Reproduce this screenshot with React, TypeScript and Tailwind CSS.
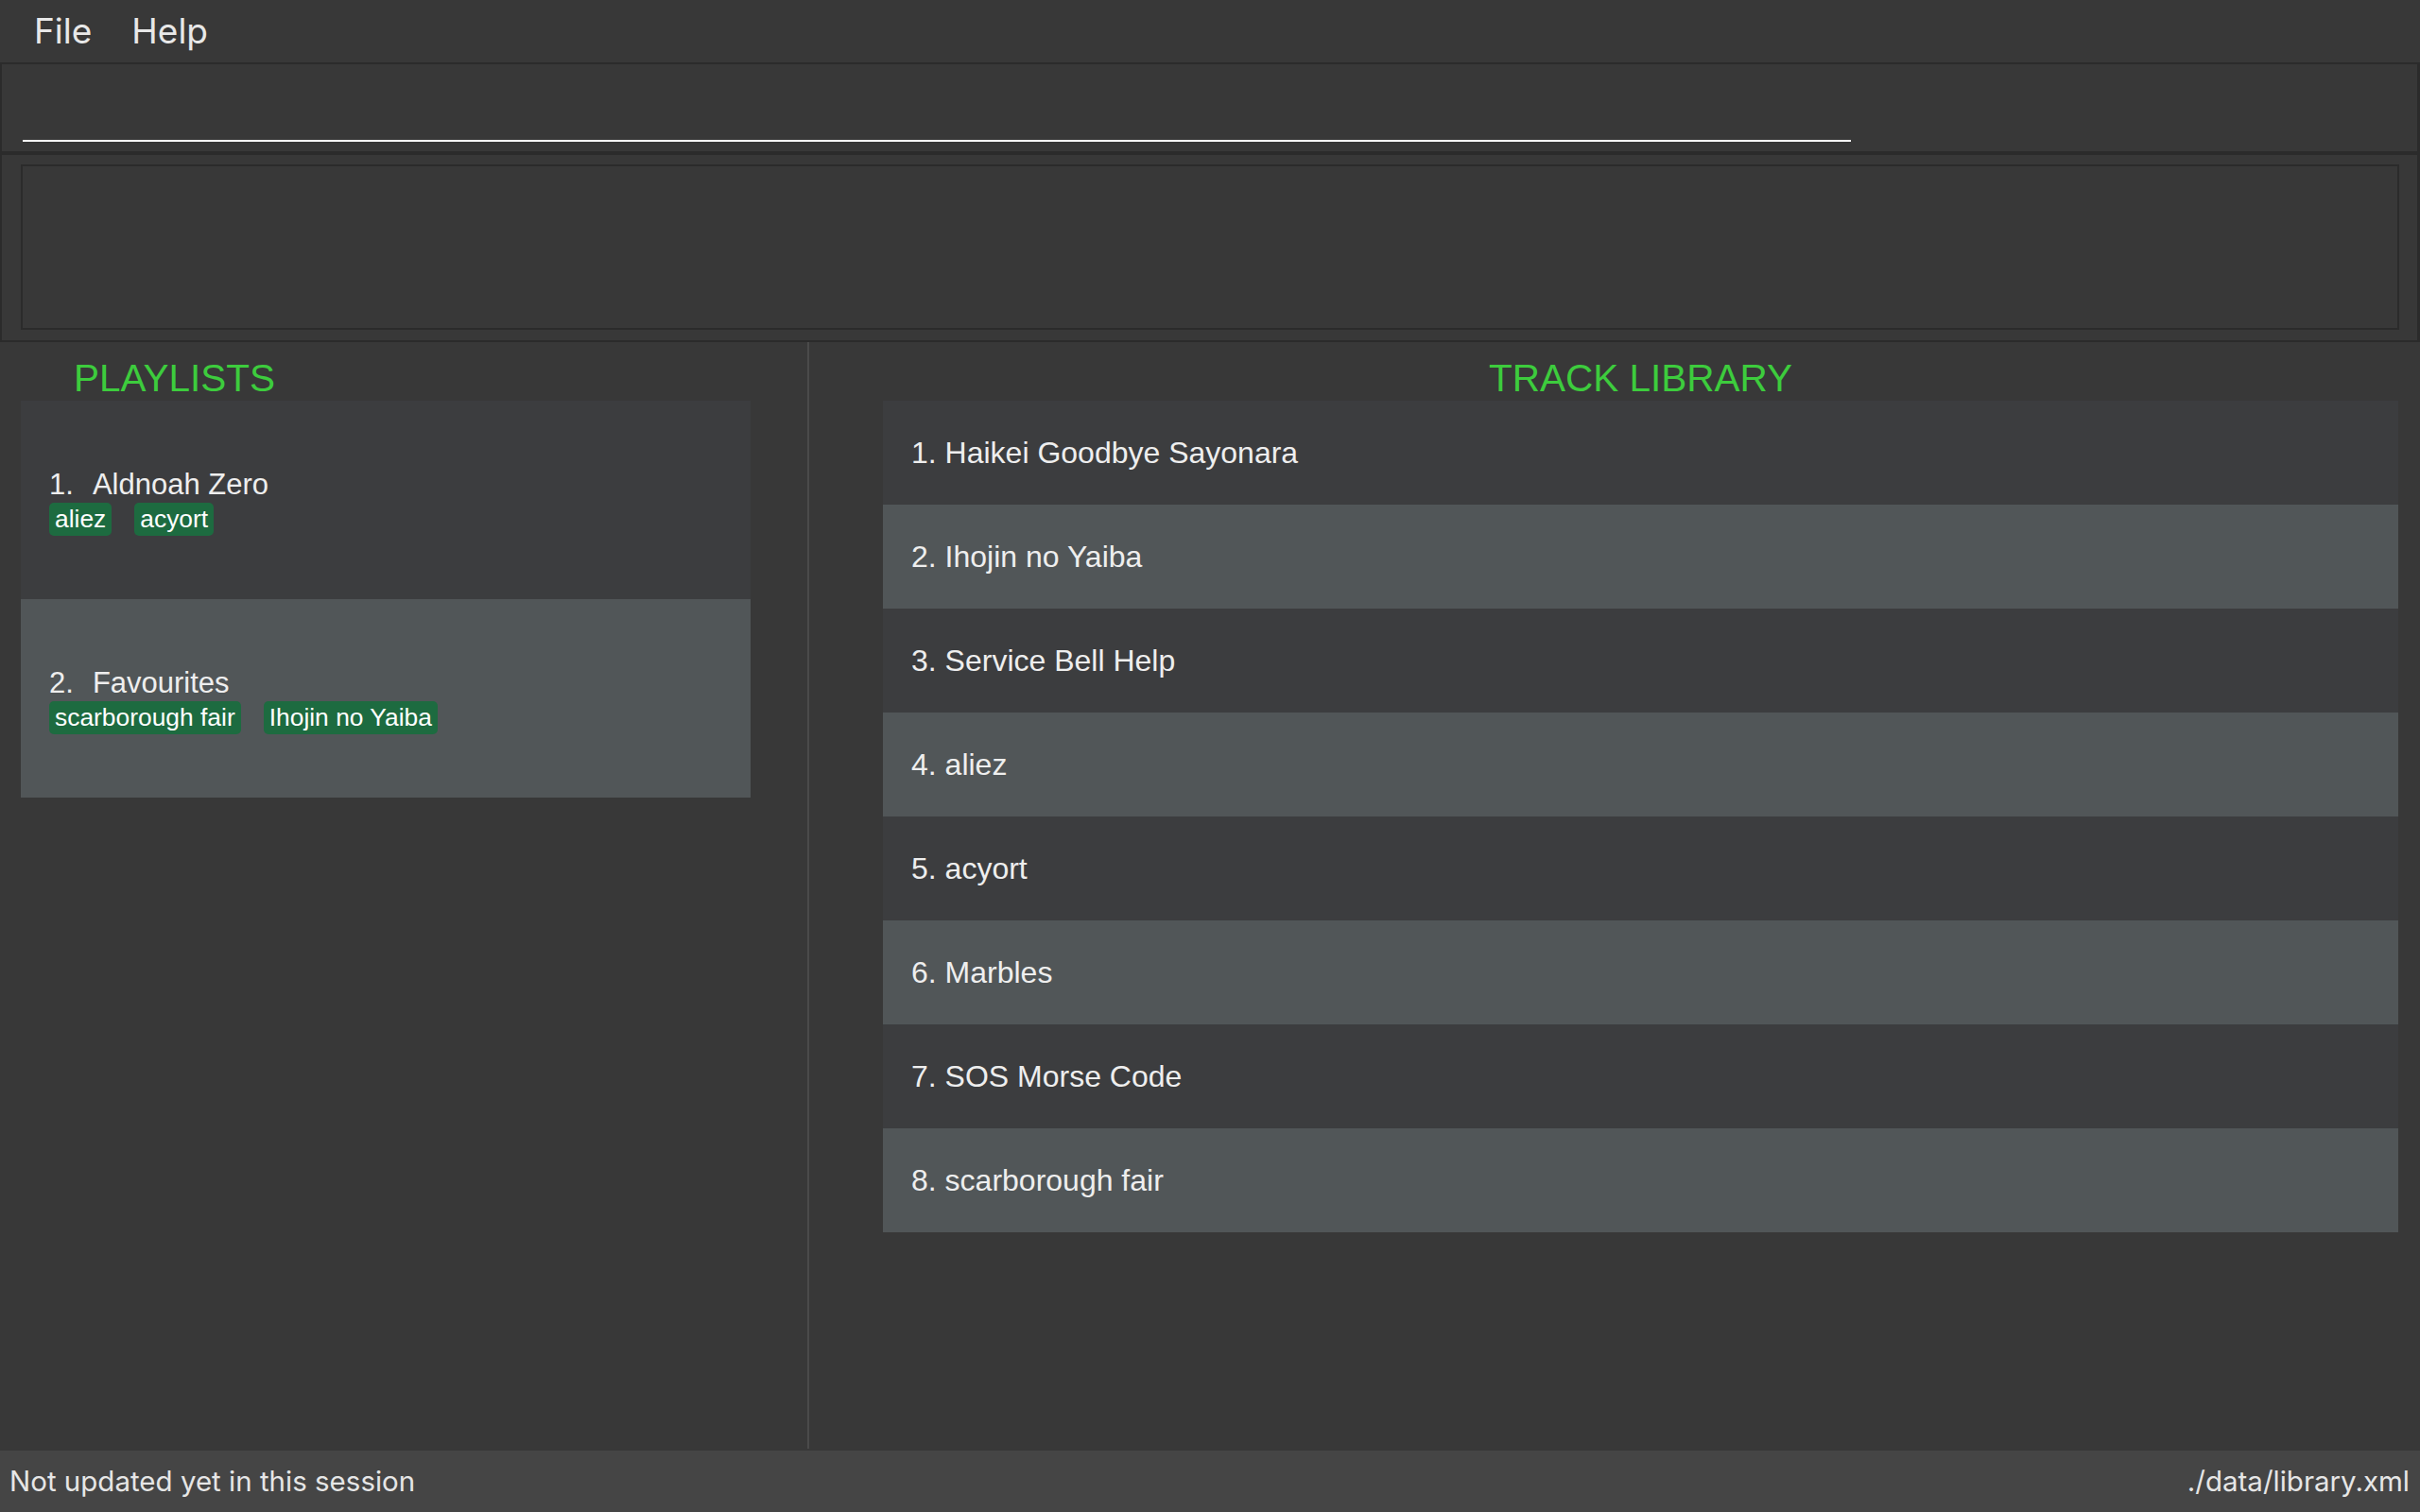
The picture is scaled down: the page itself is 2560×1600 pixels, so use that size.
import React from 'react';

const playlists = [
  { id: 1, name: 'Aldnoah Zero', tracks: ['aliez', 'acyort'] },
  { id: 2, name: 'Favourites', tracks: ['scarborough fair', 'Ihojin no Yaiba'] },
];

const tracks = [
  'Haikei Goodbye Sayonara',
  'Ihojin no Yaiba',
  'Service Bell Help',
  'aliez',
  'acyort',
  'Marbles',
  'SOS Morse Code',
  'scarborough fair',
];

const sans = "font-['Liberation_Sans',Arial,sans-serif]";
const ui = "font-['Inter','Noto_Sans',sans-serif]";

function PlaylistCard({ id, name, tracks, index }: { id: number; name: string; tracks: string[]; index: number }) {
  return (
    <div className={`h-[210px] flex flex-col justify-center pl-[30px] pt-[4px] ${index % 2 === 0 ? 'bg-[#3c3d3f]' : 'bg-[#515658]'}`}>
      <div className="flex text-[31px] leading-[36px] text-[#eeeeee]">
        <span>{id}.</span>
        <span className="ml-[20px]">{name}</span>
      </div>
      <div className="flex gap-[24px] mt-[1px]">
        {tracks.map((t) => (
          <span key={t} className="h-[35px] px-[6px] flex items-center rounded-[5px] bg-[#1d6b40] text-[26.4px] text-white">
            {t}
          </span>
        ))}
      </div>
    </div>
  );
}

export default function App() {
  return (
    <div className={`w-[2560px] h-[1600px] bg-[#383838] flex flex-col overflow-hidden ${sans}`}>
      {/* menu bar */}
      <div className={`h-[66px] flex items-center pl-[36px] gap-[42px] text-[37px] text-[#e8e8e8] ${ui}`}>
        <span>File</span>
        <span>Help</span>
      </div>
      <div className="h-[2px] bg-[#2b2b2b]" />

      {/* command box */}
      <div className="h-[92px] border-l-2 border-r-[3px] border-[#2b2b2b] pl-[22px]">
        <div className="mt-[80px] w-[1934px] h-[2px] bg-white" />
      </div>
      <div className="h-[4px] bg-[#2b2b2b]" />

      {/* result display */}
      <div className="h-[198px] border-l-2 border-r-[3px] border-b-2 border-[#2b2b2b] pl-[20px] pr-[19px] pt-[10px] pb-[11px]">
        <div className="h-full border-2 border-[#2b2b2b]" />
      </div>

      {/* main */}
      <div className="flex-1 flex min-h-0">
        <div className="w-[854px] pt-[18px] px-[22px] flex flex-col">
          <div className="h-[40px] leading-none text-[40.5px] text-[#3dcc3d] pl-[56px] mb-[4px]">PLAYLISTS</div>
          <div className="w-[772px] flex flex-col">
            {playlists.map((p, i) => (
              <PlaylistCard key={p.id} {...p} index={i} />
            ))}
          </div>
        </div>
        <div className="w-[2px] bg-[#4a4a4a]" />
        <div className="flex-1 pt-[18px] pl-[78px] pr-[23px] flex flex-col">
          <div className="h-[40px] leading-none text-[40.5px] text-[#3dcc3d] text-center mb-[4px]">TRACK LIBRARY</div>
          <div className="flex flex-col">
            {tracks.map((t, i) => (
              <div
                key={t}
                className={`h-[110px] flex items-center pl-[30px] text-[32px] text-[#eeeeee] ${i % 2 === 0 ? 'bg-[#3c3d3f]' : 'bg-[#515658]'}`}
              >
                {i + 1}. {t}
              </div>
            ))}
          </div>
        </div>
      </div>

      {/* status bar */}
      <div className={`mt-[2px] h-[65px] bg-[#454545] flex items-center justify-between pl-[10px] pr-[11px] text-[29.5px] text-[#e6e6e6] ${ui}`}>
        <span>Not updated yet in this session</span>
        <span>./data/library.xml</span>
      </div>
    </div>
  );
}
